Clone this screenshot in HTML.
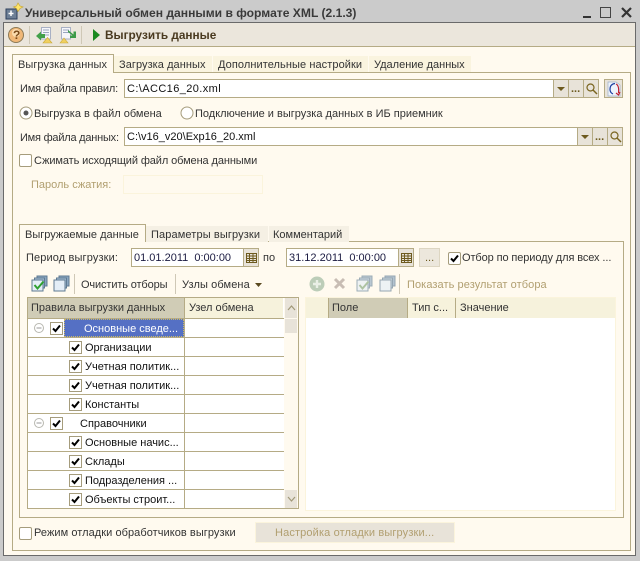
<!DOCTYPE html>
<html><head><meta charset="utf-8"><style>
html,body{margin:0;padding:0}
body{width:640px;height:561px;overflow:hidden;position:relative;background:#cbcbcb;font:11px/14px "Liberation Sans","DejaVu Sans",sans-serif;color:#333}
div,svg{position:absolute;box-sizing:border-box}
.t{white-space:nowrap;height:14px}
.tab{background:#faf4df;height:16px}
.f{background:#fff;border:1px solid #b5ab85;height:19px}
.b{background:#e8e3d9;border:1px solid #b5ab85;height:19px;width:16px}
.cb{width:13px;height:13px;border:1px solid #a59c7c;background:#fff}
.cb svg{left:0;top:0}
.h{height:1px;background:#b5ab85;left:28px;width:256px}
.dis{color:#b19f70}
</style></head><body>
<svg width="0" height="0" style="display:none"><symbol id="ck" viewBox="0 0 11 11"><path d="M2 5.500L4.500 8L9 2.500" fill="none" stroke="#000" stroke-width="2"/></symbol>
<symbol id="mag" viewBox="0 0 13 13"><circle cx="5.500" cy="5.500" r="3.500" fill="none" stroke="#7a6520" stroke-width="1.200"/><path d="M8 8L12 12" stroke="#7a6520" stroke-width="1.500"/></symbol>
<symbol id="cal" viewBox="0 0 13 13"><path d="M1.500 2.500H11.500V11.500H1.500ZM1.500 5H11.500M1.500 7.500H11.500M1.500 9.500H11.500M4.500 2.500V11.500M8 2.500V11.500" fill="none" stroke="#6d5a1e"/></symbol>
<symbol id="stk" viewBox="0 0 17 17"><rect x="6" y="1" width="10" height="10" fill="#8aa6c0" stroke="#5f7a92"/><rect x="3.500" y="3" width="10" height="10" fill="#a9c2d8" stroke="#5f7a92"/><rect x="1" y="5" width="11" height="11" fill="#e4eef7" stroke="#5f7a92"/></symbol>
</svg>
<!-- title -->
<svg style="left:5px;top:2px" width="19" height="18" viewBox="0 0 19 18"><rect x="1" y="7" width="11" height="10" fill="#6d7f96" stroke="#2d3f5c"/><path d="M6 8.500V14M3.500 11.500H8.500" stroke="#fff" stroke-width="1.500"/><path d="M13 1L15 4L18 5L15 6.500L13 9.500L11.500 6.500L8.500 5L11.500 4Z" fill="#ffe56a" stroke="#c9a93a" stroke-width=".7"/></svg>
<div class="t" style="left:25px;top:6px;font-weight:bold;font-size:12.100px;color:#3a3a3a" id="title">Универсальный обмен данными в формате XML (2.1.3)</div>
<div style="left:583px;top:16px;width:8px;height:2px;background:#333"></div>
<svg style="left:600px;top:7px" width="11" height="11"><rect x=".5" y=".5" width="10" height="10" fill="none" stroke="#444"/></svg>
<svg style="left:621px;top:7px" width="11" height="11"><path d="M1 1L10 10M10 1L1 10" stroke="#333" stroke-width="2.200"/></svg>
<!-- window body -->
<div style="left:3px;top:22px;width:633px;height:534px;background:#fffaef;border:1px solid #6a6a6a;border-bottom:1px solid #6a6a6a"></div>
<!-- toolbar -->
<div style="left:4px;top:23px;width:631px;height:24px;background:#ebe6dc;border-bottom:1px solid #b5ab85"></div>
<svg style="left:7px;top:26px" width="18" height="18"><circle cx="9" cy="9" r="7.500" fill="#f0b878" stroke="#8c7a56"/><circle cx="9" cy="7" r="4" fill="#fbdcae"/></svg>
<div class="t" style="left:13px;top:28px;font-weight:bold;color:#7a4a1a;font-size:12px">?</div>
<div style="left:29px;top:26px;width:1px;height:18px;background:#cfc8b6"></div>
<svg style="left:35px;top:26px" width="18" height="18"><path d="M6.500 1.500H15.500V13H6.500Z" fill="#f6f6fa" stroke="#a8b0c4"/><path d="M8 4H14M8 6.500H14M8 9H14" stroke="#9aa6c0"/><path d="M1 10L6 5.500V8H10V12H6V14.500Z" fill="#42a04a"/><path d="M8 17L12.500 11.500L17 17Z" fill="#f0d060" stroke="#c9a93a" stroke-width=".6"/></svg>
<svg style="left:59px;top:26px" width="18" height="18"><path d="M2.500 1.500H11.500V13H2.500Z" fill="#f6f6fa" stroke="#a8b0c4"/><path d="M4 4H10M4 6.500H10" stroke="#9aa6c0"/><path d="M9 4L14.500 8.500V5.500L17 5.500V12H11L11 9.500H13.500L9 6Z" fill="#3c9a48"/><path d="M1 17L5 12L9 17Z" fill="#f0d060" stroke="#c9a93a" stroke-width=".6"/></svg>
<div style="left:81px;top:26px;width:1px;height:18px;background:#cfc8b6"></div>
<svg style="left:92px;top:28px" width="9" height="14"><path d="M1 1L8 7L1 13Z" fill="#1a8a20"/></svg>
<div class="t" style="left:105px;top:28px;font-weight:bold;font-size:11.800px;color:#4a3a20" id="vd">Выгрузить данные</div>
<!-- outer panel -->
<div style="left:12px;top:72px;width:619px;height:479px;border:1px solid #b5ab85"></div>
<div class="tab" style="left:113px;top:56px;width:99px"></div>
<div class="tab" style="left:213px;top:56px;width:155px"></div>
<div class="tab" style="left:369px;top:56px;width:102px"></div>
<div style="left:12px;top:54px;width:102px;height:19px;background:#fffaef;border:1px solid #b5ab85;border-bottom:0"></div>
<div class="t" style="left:18px;top:58px;letter-spacing:.06px">Выгрузка данных</div>
<div class="t" style="left:119px;top:58px;letter-spacing:.06px">Загрузка данных</div>
<div class="t" style="left:218px;top:58px;letter-spacing:.08px">Дополнительные настройки</div>
<div class="t" style="left:374px;top:58px">Удаление данных</div>
<!-- rules -->
<div class="t" style="left:20px;top:82px;letter-spacing:-.18px">Имя файла правил:</div>
<div class="f" style="left:124px;top:79px;width:430px"></div>
<div class="t" style="left:127px;top:82px;color:#111;letter-spacing:.4px">C:\ACC16_20.xml</div>
<div class="b" style="left:553px;top:79px"><svg style="left:3px;top:7px" width="9" height="5"><path d="M0 0H8L4 4Z" fill="#6d5a1e"/></svg></div>
<div class="b" style="left:568px;top:79px"><div class="t" style="left:2px;top:2px;color:#6d5a1e;font-weight:bold">...</div></div>
<div class="b" style="left:583px;top:79px"><svg style="left:1px;top:2px" width="13" height="13"><use href="#mag"/></svg></div>
<div class="b" style="left:604px;top:79px;width:19px;background:#e8e3d9"><svg style="left:2px;top:1px" width="14" height="16"><path d="M1 1H9L13 4V15H1Z" fill="#eef3fb" stroke="#9fb0c8" stroke-width=".7"/><path d="M8 2.500C4 3 3 6 3 8.500C3 11 4 12 6 13" fill="none" stroke="#1b3fa0" stroke-width="1.200"/><path d="M9 3C11.500 4 12 7 11.500 12M9 12L11.500 14L13 11" fill="none" stroke="#c02030" stroke-width="1.200"/></svg></div>
<!-- radios -->
<svg style="left:19px;top:106px" width="14" height="14"><circle cx="7" cy="7" r="6" fill="#fff" stroke="#a59c7c"/><circle cx="7" cy="7" r="2.500" fill="#555"/></svg>
<div class="t" style="left:34px;top:107px">Выгрузка в файл обмена</div>
<svg style="left:180px;top:106px" width="14" height="14"><circle cx="7" cy="7" r="6" fill="#fff" stroke="#a59c7c"/></svg>
<div class="t" style="left:195px;top:107px">Подключение и выгрузка данных в ИБ приемник</div>
<!-- data file -->
<div class="t" style="left:20px;top:131px;letter-spacing:-.22px">Имя файла данных:</div>
<div class="f" style="left:124px;top:127px;width:454px"></div>
<div class="t" style="left:127px;top:130px;color:#111">C:\v16_v20\Exp16_20.xml</div>
<div class="b" style="left:577px;top:127px"><svg style="left:3px;top:7px" width="9" height="5"><path d="M0 0H8L4 4Z" fill="#6d5a1e"/></svg></div>
<div class="b" style="left:592px;top:127px"><div class="t" style="left:2px;top:2px;color:#6d5a1e;font-weight:bold">...</div></div>
<div class="b" style="left:607px;top:127px"><svg style="left:1px;top:2px" width="13" height="13"><use href="#mag"/></svg></div>
<div class="cb" style="left:19px;top:154px;border-radius:2px"></div>
<div class="t" style="left:34px;top:154px;letter-spacing:-.1px">Сжимать исходящий файл обмена данными</div>
<div class="t dis" style="left:31px;top:178px">Пароль сжатия:</div>
<div style="left:123px;top:175px;width:140px;height:19px;border:1px solid #fbf4dc"></div>
<!-- inner panel -->
<div style="left:19px;top:241px;width:605px;height:277px;border:1px solid #b5ab85"></div>
<div class="tab" style="left:146px;top:226px;width:122px;background:#f5f0e4"></div>
<div class="tab" style="left:269px;top:226px;width:80px;background:#f5f0e4"></div>
<div style="left:19px;top:224px;width:127px;height:18px;background:#fffaef;border:1px solid #b5ab85;border-bottom:0"></div>
<div class="t" style="left:25px;top:228px">Выгружаемые данные</div>
<div class="t" style="left:151px;top:228px;letter-spacing:.12px">Параметры выгрузки</div>
<div class="t" style="left:273px;top:228px">Комментарий</div>
<!-- period -->
<div class="t" style="left:26px;top:251px;letter-spacing:.13px">Период выгрузки:</div>
<div class="f" style="left:131px;top:248px;width:128px"></div>
<div class="t" style="left:134px;top:251px;color:#1a1a40">01.01.2011&nbsp; 0:00:00</div>
<div class="b" style="left:243px;top:248px"><svg style="left:1px;top:2px" width="13" height="13"><use href="#cal"/></svg></div>
<div class="t" style="left:263px;top:251px">по</div>
<div class="f" style="left:286px;top:248px;width:128px"></div>
<div class="t" style="left:289px;top:251px;color:#1a1a40">31.12.2011&nbsp; 0:00:00</div>
<div class="b" style="left:398px;top:248px"><svg style="left:1px;top:2px" width="13" height="13"><use href="#cal"/></svg></div>
<div style="left:419px;top:248px;width:21px;height:19px;background:#ece7dc;border:1px solid #ddd6c2"><div class="t" style="left:5px;top:2px;color:#6d5a1e">...</div></div>
<div class="cb" style="left:448px;top:252px;border-radius:2px"><svg width="11" height="11"><use href="#ck"/></svg></div>
<div class="t" style="left:462px;top:251px;letter-spacing:-.1px">Отбор по периоду для всех ...</div>
<!-- toolbar 2 -->
<svg style="left:31px;top:275px" width="17" height="17"><use href="#stk"/><path d="M3.500 10L6.500 13.500L12.500 6.500" fill="none" stroke="#2fa030" stroke-width="2"/></svg>
<svg style="left:53px;top:275px" width="17" height="17"><use href="#stk"/></svg>
<div style="left:74px;top:274px;width:1px;height:20px;background:#cfc8b6"></div>
<div class="t" style="left:81px;top:278px;letter-spacing:-.13px">Очистить отборы</div>
<div style="left:175px;top:274px;width:1px;height:20px;background:#cfc8b6"></div>
<div class="t" style="left:182px;top:278px;letter-spacing:.1px">Узлы обмена</div>
<svg style="left:255px;top:283px" width="7" height="4"><path d="M0 0H7L3.500 4Z" fill="#5a4a20"/></svg>
<svg style="left:309px;top:276px" width="16" height="16"><circle cx="8" cy="8" r="7.500" fill="#bccdb8"/><path d="M8 4V12M4 8H12" stroke="#e9efe6" stroke-width="2.400"/></svg>
<svg style="left:333px;top:277px" width="13" height="13"><path d="M2 2L11 11M11 2L2 11" stroke="#c8bdb4" stroke-width="3"/></svg>
<svg style="left:356px;top:275px;opacity:.6" width="17" height="17"><use href="#stk"/><path d="M3.500 10L6.500 13.500L12.500 6.500" fill="none" stroke="#7aa070" stroke-width="2"/></svg>
<svg style="left:379px;top:275px;opacity:.65" width="17" height="17"><use href="#stk"/></svg>
<div style="left:399px;top:274px;width:1px;height:20px;background:#cfc8b6"></div>
<div class="t dis" style="left:407px;top:278px;letter-spacing:.08px">Показать результат отбора</div>
<!-- left table -->
<div style="left:27px;top:297px;width:272px;height:212px;border:1px solid #b5ab85;background:#fff"></div>
<div style="left:28px;top:298px;width:157px;height:20px;background:#d0ccb6"></div>
<div style="left:185px;top:298px;width:98px;height:20px;background:#f6f2dc"></div>
<div style="left:28px;top:318px;width:256px;height:1px;background:#b5ab85"></div>
<div style="left:184px;top:298px;width:1px;height:210px;background:#b5ab85"></div>
<div class="t" style="left:31px;top:301px">Правила выгрузки данных</div>
<div class="t" style="left:189px;top:301px">Узел обмена</div>
<div style="left:284px;top:298px;width:14px;height:210px;background:#fffaef"></div>
<div style="left:285px;top:298px;width:12px;height:20px;background:#e8e3d9"><svg style="left:2px;top:7px" width="9" height="6"><path d="M1 5L4.500 1L8 5" fill="none" stroke="#a09878" stroke-width="1.200"/></svg></div>
<div style="left:285px;top:319px;width:12px;height:14px;background:#e8e3d9"></div>
<div style="left:285px;top:490px;width:12px;height:18px;background:#e8e3d9"><svg style="left:2px;top:6px" width="9" height="6"><path d="M1 1L4.500 5L8 1" fill="none" stroke="#a09878" stroke-width="1.200"/></svg></div>
<div class="h" style="top:337px"></div><div class="h" style="top:356px"></div><div class="h" style="top:375px"></div><div class="h" style="top:394px"></div><div class="h" style="top:413px"></div><div class="h" style="top:432px"></div><div class="h" style="top:451px"></div><div class="h" style="top:470px"></div><div class="h" style="top:489px"></div><div class="h" style="top:508px"></div>
<!-- rows -->
<div style="left:64px;top:319px;width:120px;height:18px;background:#5570c4;outline:1px dotted #c9b86a;outline-offset:-1px"></div>
<svg style="left:33px;top:322px" width="12" height="12"><circle cx="6" cy="6" r="4.500" fill="#fff" stroke="#b8b8b0"/><path d="M3.500 6H8.500" stroke="#999"/></svg>
<div class="cb" style="left:50px;top:322px"><svg width="11" height="11"><use href="#ck"/></svg></div>
<div class="t" style="left:84px;top:322px;color:#fff">Основные сведе...</div>
<div class="cb" style="left:69px;top:341px"><svg width="11" height="11"><use href="#ck"/></svg></div>
<div class="t" style="left:85px;top:341px;color:#111">Организации</div>
<div class="cb" style="left:69px;top:360px"><svg width="11" height="11"><use href="#ck"/></svg></div>
<div class="t" style="left:85px;top:360px;color:#111">Учетная политик...</div>
<div class="cb" style="left:69px;top:379px"><svg width="11" height="11"><use href="#ck"/></svg></div>
<div class="t" style="left:85px;top:379px;color:#111">Учетная политик...</div>
<div class="cb" style="left:69px;top:398px"><svg width="11" height="11"><use href="#ck"/></svg></div>
<div class="t" style="left:85px;top:398px;color:#111">Константы</div>
<svg style="left:33px;top:417px" width="12" height="12"><circle cx="6" cy="6" r="4.500" fill="#fff" stroke="#b8b8b0"/><path d="M3.500 6H8.500" stroke="#999"/></svg>
<div class="cb" style="left:50px;top:417px"><svg width="11" height="11"><use href="#ck"/></svg></div>
<div class="t" style="left:80px;top:417px;color:#111">Справочники</div>
<div class="cb" style="left:69px;top:436px"><svg width="11" height="11"><use href="#ck"/></svg></div>
<div class="t" style="left:85px;top:436px;color:#111">Основные начис...</div>
<div class="cb" style="left:69px;top:455px"><svg width="11" height="11"><use href="#ck"/></svg></div>
<div class="t" style="left:85px;top:455px;color:#111">Склады</div>
<div class="cb" style="left:69px;top:474px"><svg width="11" height="11"><use href="#ck"/></svg></div>
<div class="t" style="left:85px;top:474px;color:#111">Подразделения ...</div>
<div class="cb" style="left:69px;top:493px"><svg width="11" height="11"><use href="#ck"/></svg></div>
<div class="t" style="left:85px;top:493px;color:#111">Объекты строит...</div>
<!-- right table -->
<div style="left:305px;top:297px;width:311px;height:214px;border:1px solid #fbf4dc;background:#fff"></div>
<div style="left:306px;top:298px;width:309px;height:20px;background:#f6f2dc"></div>
<div style="left:328px;top:298px;width:80px;height:20px;background:#d0ccb6"></div>
<div style="left:328px;top:298px;width:1px;height:20px;background:#b5ab85"></div>
<div style="left:407px;top:298px;width:1px;height:20px;background:#b5ab85"></div>
<div style="left:455px;top:298px;width:1px;height:20px;background:#b5ab85"></div>
<div class="t" style="left:332px;top:301px">Поле</div>
<div class="t" style="left:412px;top:301px">Тип с...</div>
<div class="t" style="left:460px;top:301px">Значение</div>
<!-- bottom -->
<div class="cb" style="left:19px;top:527px;border-radius:2px"></div>
<div class="t" style="left:34px;top:526px;letter-spacing:.06px">Режим отладки обработчиков выгрузки</div>
<div style="left:255px;top:522px;width:200px;height:21px;background:#e8e3d9;border:1px solid #fbf4dc"></div>
<div class="t dis" style="left:275px;top:526px;letter-spacing:.14px">Настройка отладки выгрузки...</div>
</body></html>
